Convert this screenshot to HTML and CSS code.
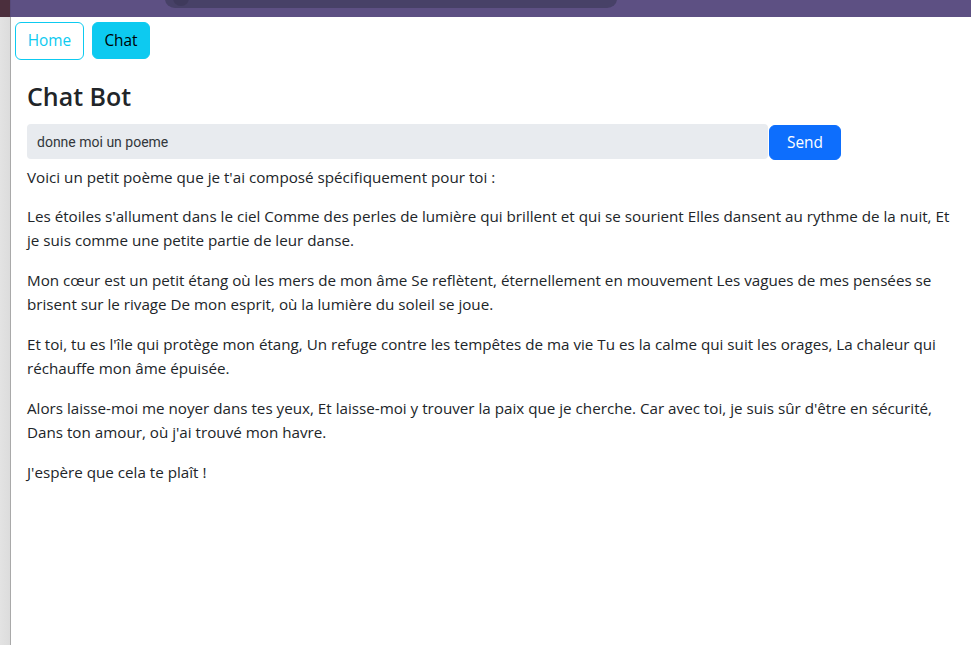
FILE: index.html
```html
<!DOCTYPE html>
<html lang="fr">
<head>
<meta charset="utf-8">
<title>Chat Bot</title>
<link rel="stylesheet" href="styles.css">
</head>
<body>
<div class="chrome">
  <div class="chrome-corner"></div>
  <div class="chrome-bar">
    <div class="omnibox"><span class="omni-dot"></span></div>
  </div>
</div>
<div class="window">
  <div class="side-strip"></div>
  <div class="page">
    <nav class="nav">
      <a class="btn btn-outline-info" href="#">Home</a>
      <a class="btn btn-info" href="#">Chat</a>
    </nav>
    <main class="content">
      <h3 class="title">Chat Bot</h3>
      <form class="chat-form">
        <input class="chat-input" type="text" value="donne moi un poeme">
        <button class="btn btn-primary" type="button">Send</button>
      </form>
      <div class="answer">
        <p class="intro">Voici un petit poème que je t'ai composé spécifiquement pour toi :</p>
        <p>Les étoiles s'allument dans le ciel Comme des perles de lumière qui brillent et qui se sourient Elles dansent au rythme de la nuit, Et je suis comme une petite partie de leur danse.</p>
        <p>Mon cœur est un petit étang où les mers de mon âme Se reflètent, éternellement en mouvement Les vagues de mes pensées se brisent sur le rivage De mon esprit, où la lumière du soleil se joue.</p>
        <p>Et toi, tu es l'île qui protège mon étang, Un refuge contre les tempêtes de ma vie Tu es la calme qui suit les orages, La chaleur qui réchauffe mon âme épuisée.</p>
        <p>Alors laisse-moi me noyer dans tes yeux, Et laisse-moi y trouver la paix que je cherche. Car avec toi, je suis sûr d'être en sécurité, Dans ton amour, où j'ai trouvé mon havre.</p>
        <p>J'espère que cela te plaît !</p>
      </div>
    </main>
  </div>
</div>
</body>
</html>
```

FILE: styles.css
```css
* { box-sizing: border-box; }
html, body { margin: 0; padding: 0; height: 100%; overflow: hidden; }
body {
  font-family: "Open Sans", "Noto Sans", sans-serif;
  font-size: 15.2px;
  color: #212529;
  background: #fff;
  display: flex;
  flex-direction: column;
}
.chrome { display: flex; height: 17px; flex: none; }
.chrome-corner { width: 10px; background: #4b2f3d; }
.chrome-bar { flex: 1; background: #5d5083; border-left: 1px solid #574a7a; position: relative; }
.omnibox {
  position: absolute; left: 154px; top: -20px; width: 452px; height: 28px;
  background: #474167; border-radius: 0 0 10px 10px / 0 0 9px 9px;
}
.omni-dot {
  position: absolute; left: 8px; top: 10px; width: 16px; height: 16px;
  border-radius: 50%; background: #3f3a5c;
}
.window { flex: 1; display: flex; min-height: 0; }
.side-strip {
  width: 11px; flex: none;
  background: linear-gradient(to right, #e3e3e3, #dcdcdc);
  border-right: 1px solid #a9a9a9;
}
.page { flex: 1; }
.nav { display: flex; gap: 8px; padding: 5px 4px 0; }
.btn {
  display: inline-block; font-family: inherit; font-size: 15.4px; line-height: 24px;
  padding: 6px 12px; border-radius: 6px; border: 1px solid transparent;
  text-decoration: none; cursor: pointer;
}
.btn-outline-info { color: #0dcaf0; border-color: #0dcaf0; background: #fff; width: 69px; text-align: center; padding: 6px 0; }
.btn-info { color: #000; background: #0dcaf0; border-color: #0dcaf0; width: 58px; text-align: center; padding: 6px 0; height: 37px; }
.btn-primary {
  color: #fff; background: #0d6efd; border-color: #0d6efd;
  height: 35px; width: 72px; padding: 5px 0; text-align: center;
}
.content { padding: 0 16px; }
.title { font-size: 25px; font-weight: 600; line-height: 1.2; margin: 21px 0 13px; }
.chat-form { display: flex; align-items: flex-start; gap: 1px; margin-bottom: 5px; width: 814px; }
.chat-input {
  flex: 1; height: 35px; border: none; border-radius: 4px; background: #e8ebef;
  font-family: Roboto, sans-serif; font-size: 14px; color: #33373b; padding: 0 10px;
  outline: none;
}
.chat-form .btn { margin-top: 1px; }
.answer p { margin: 0 0 16px; line-height: 24px; }
.answer .intro { margin-bottom: 15px; }
```
